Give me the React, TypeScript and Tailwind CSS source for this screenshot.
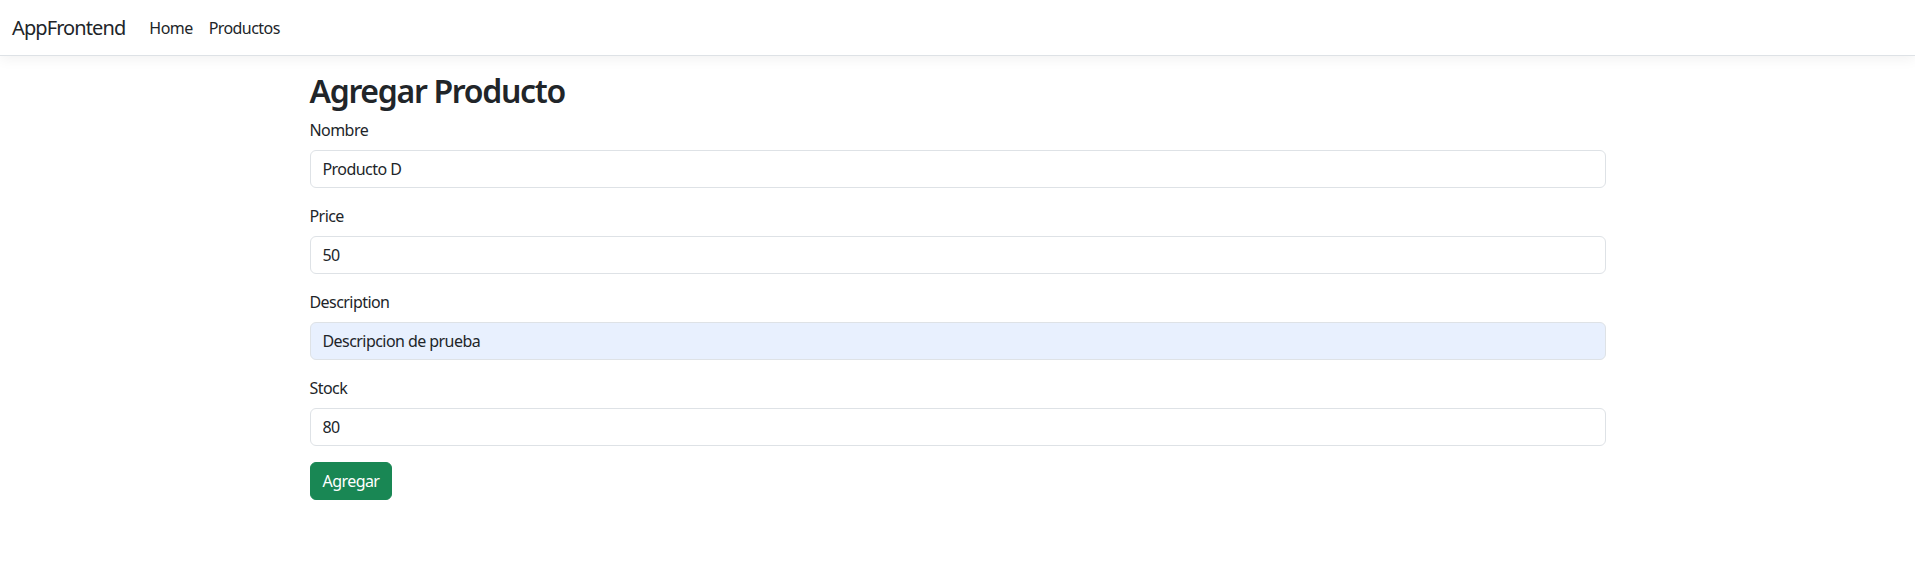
import React from "react";

const font = { fontFamily: '"Noto Sans", "Open Sans", sans-serif', letterSpacing: "-0.035em" };

function Field({ label, value, autofill }: { label: string; value: string; autofill?: boolean }) {
  return (
    <div className="mb-4">
      <label className="mb-2 block text-[16px] leading-6 text-[#212529]">{label}</label>
      <input
        readOnly
        value={value}
        className={`block h-[38px] w-full rounded-[6px] border border-[#dee2e6] px-3 py-[6px] text-[16px] leading-6 text-[#212529] outline-none ${
          autofill ? "bg-[#e8f0fe]" : "bg-white"
        }`}
        style={font}
      />
    </div>
  );
}

export default function App() {
  return (
    <div className="min-h-[588px] bg-white text-[#212529]" style={font}>
      <nav className="mb-4 flex h-[56px] items-center border-b border-[#dee2e6] bg-white shadow-[0_4px_12px_rgba(0,0,0,0.05)]">
        <div className="flex items-center px-3">
          <a className="mr-4 text-[20px] leading-[30px] tracking-[-0.045em] text-[#212529]">AppFrontend</a>
          <ul className="flex">
            <li>
              <a className="block px-2 py-2 text-[16px] leading-6 text-[#212529]">Home</a>
            </li>
            <li>
              <a className="block px-2 py-2 text-[16px] leading-6 text-[#212529]">Productos</a>
            </li>
          </ul>
        </div>
      </nav>
      <div className="mx-auto w-[1320px] px-3">
        <main className="pb-4">
          <h2 className="mb-2 text-[32px] font-semibold leading-[1.2] tracking-[-0.041em] text-[#212529]">Agregar Producto</h2>
          <Field label="Nombre" value="Producto D" />
          <Field label="Price" value="50" />
          <Field label="Description" value="Descripcion de prueba" autofill />
          <Field label="Stock" value="80" />
          <button
            className="h-[38px] rounded-[6px] border border-[#198754] bg-[#198754] px-3 py-[6px] text-[16px] leading-6 text-white"
            style={font}
          >
            Agregar
          </button>
        </main>
      </div>
    </div>
  );
}
